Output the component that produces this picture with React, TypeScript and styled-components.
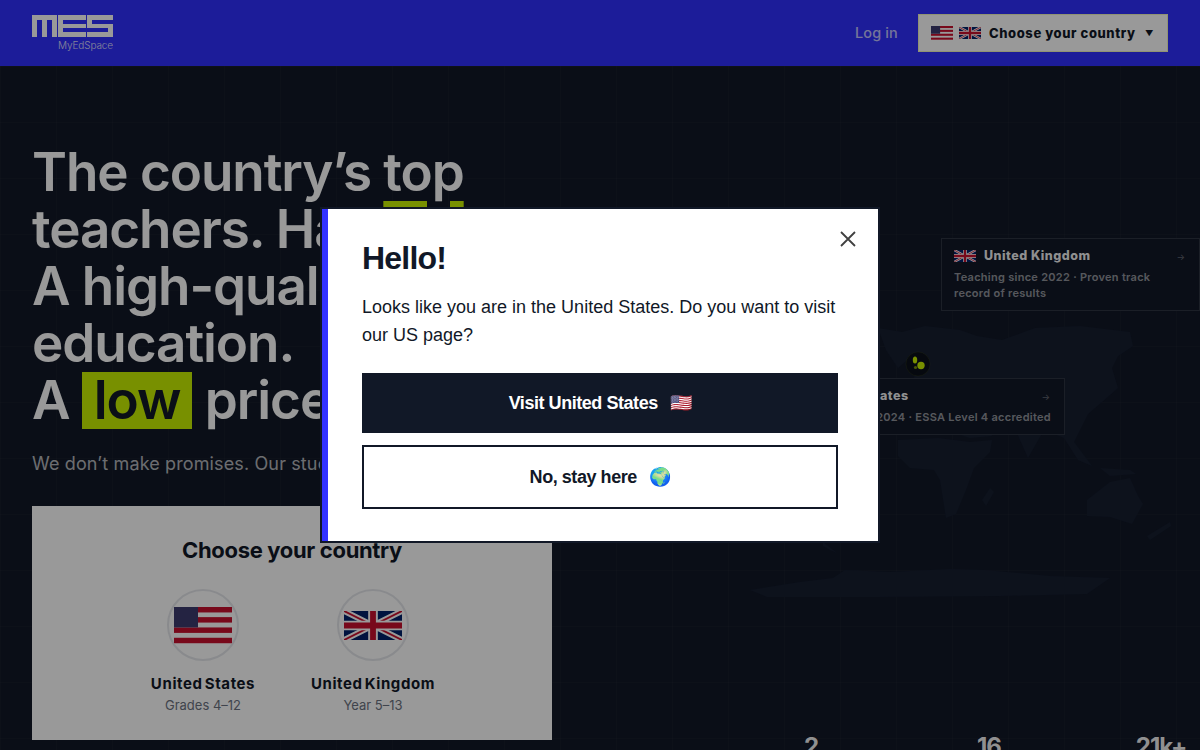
import React from "react";
import styled, { createGlobalStyle } from "styled-components";

const GlobalStyle = createGlobalStyle`
  html, body {
    margin: 0;
    height: 100%;
    overflow: hidden;
    background: #111827;
  }
  * {
    box-sizing: border-box;
  }
`;

const Page = styled.div`
  height: 750px;
  overflow: hidden;
  display: flex;
  flex-direction: column;
  font-family: Inter, "Liberation Sans", sans-serif;
  color: #fff;
  background-color: #111827;
`;

const Header = styled.header`
  flex: 0 0 66px;
  display: flex;
  align-items: center;
  justify-content: space-between;
  padding: 0 32px;
  background: #3030ff;
`;

const Logo = styled.div`
  display: flex;
  flex-direction: column;
  align-items: flex-end;
  gap: 2px;
  width: 81px;
`;

const LogoName = styled.span`
  font-size: 10px;
  line-height: 12px;
  font-weight: 300;
  letter-spacing: -0.01em;
  color: rgba(255, 255, 255, 0.85);
`;

const Nav = styled.nav`
  display: flex;
  align-items: center;
  gap: 20px;
`;

const LoginLink = styled.a`
  margin-bottom: 2px;
  font-size: 14.5px;
  font-weight: 500;
  letter-spacing: 0.01em;
  color: rgba(255, 255, 255, 0.72);
`;

const CountryButton = styled.button`
  width: 250px;
  height: 38px;
  display: flex;
  align-items: center;
  gap: 6px;
  padding: 0 12px 1px;
  border: 1px solid #f0f5c0;
  background: #fff;
  color: #111827;
  font-family: inherit;
  font-size: 13px;
  font-weight: 800;
  letter-spacing: 0.045em;
`;

const ButtonLabel = styled.span`
  margin-left: 2px;
  flex: 1;
  text-align: left;
`;

const Caret = styled.span`
  font-size: 8px;
  margin-right: 1px;
`;

const Main = styled.main`
  flex: 1;
  display: grid;
  grid-template-columns: 600px 600px;
  min-height: 0;
  background-image:
    linear-gradient(rgba(255, 255, 255, 0.02) 1px, transparent 1px),
    linear-gradient(90deg, rgba(255, 255, 255, 0.02) 1px, transparent 1px);
  background-size: 56px 56px;
`;

const Hero = styled.section`
  padding: 78px 48px 0 32px;
`;

const Headline = styled.h1`
  margin: 0;
  font-size: 53px;
  line-height: 57px;
  font-weight: 600;
  letter-spacing: -0.02em;
  white-space: nowrap;
`;

const Underlined = styled.span`
  text-decoration: underline;
  text-decoration-color: #c8f000;
  text-decoration-thickness: 8px;
  text-underline-offset: 10px;
`;

const Highlight = styled.span`
  display: inline-block;
  padding: 0 12px;
  background: #c8f000;
  color: #111827;
`;

const Lead = styled.p`
  margin: 21px 0 0;
  font-size: 18px;
  line-height: 28px;
  letter-spacing: 0.007em;
  color: rgba(255, 255, 255, 0.7);
  white-space: nowrap;
`;

const ChooserCard = styled.div`
  margin-top: 28px;
  height: 234px;
  padding-top: 30px;
  background: #fff;
  color: #111827;
  text-align: center;
`;

const ChooserTitle = styled.h2`
  margin: 0;
  font-size: 22px;
  line-height: 28px;
  font-weight: 700;
  letter-spacing: -0.015em;
`;

const ChooserRow = styled.div`
  display: flex;
  justify-content: center;
  margin-top: 25px;
  padding-right: 8px;
`;

const ChooserItem = styled.div`
  width: 170px;
  display: flex;
  flex-direction: column;
  align-items: center;
`;

const FlagCircle = styled.div`
  width: 72px;
  height: 72px;
  border-radius: 50%;
  border: 2px solid #e5e7eb;
  display: flex;
  align-items: center;
  justify-content: center;
`;

const ChooserName = styled.div`
  margin-top: 13px;
  font-size: 15px;
  line-height: 20px;
  font-weight: 700;
  letter-spacing: 0.04em;
  word-spacing: -2px;
`;

const ChooserSub = styled.div`
  margin-top: 2px;
  font-size: 13px;
  line-height: 18px;
  color: #6b7280;
`;

const Side = styled.section`
  display: flex;
  flex-direction: column;
  min-height: 0;
`;

const MapCanvas = styled.div`
  position: relative;
  flex: 0 0 666px;
`;

const WorldMap = styled.svg`
  position: absolute;
  left: 40px;
  top: 244px;
  width: 560px;
  height: 300px;
`;

const MapPin = styled.svg`
  position: absolute;
  left: 304px;
  top: 284px;
  width: 28px;
  height: 28px;
`;

const RegionCard = styled.div<{ $left: number; $top: number; $width: number }>`
  position: absolute;
  left: ${({ $left }) => $left}px;
  top: ${({ $top }) => $top}px;
  width: ${({ $width }) => $width}px;
  padding: 9px 12px;
  background: #111827;
  border: 1px solid rgba(255, 255, 255, 0.12);
`;

const RegionHead = styled.div`
  display: flex;
  align-items: center;
  gap: 8px;
`;

const RegionName = styled.span`
  flex: 1;
  font-size: 12.5px;
  line-height: 16px;
  font-weight: 800;
  letter-spacing: 0.04em;
  color: rgba(255, 255, 255, 0.95);
`;

const RegionArrow = styled.span`
  margin-right: 2px;
  font-size: 9px;
  color: rgba(255, 255, 255, 0.35);
`;

const RegionText = styled.p`
  margin: 5px 0 0;
  font-size: 11px;
  line-height: 16px;
  font-weight: 600;
  letter-spacing: 0.025em;
  color: rgba(255, 255, 255, 0.55);
`;

const Stats = styled.div`
  display: grid;
  grid-template-columns: 176px 180px 164px;
  padding-left: 123px;
`;

const StatValue = styled.div`
  text-align: center;
  font-size: 24px;
  line-height: 30px;
  font-weight: 700;
  letter-spacing: -0.04em;
  color: rgba(255, 255, 255, 0.95);
`;

const Overlay = styled.div`
  position: fixed;
  inset: 0;
  display: flex;
  align-items: center;
  justify-content: center;
  background: rgba(0, 0, 0, 0.4);
`;

const Modal = styled.div`
  position: relative;
  width: 560px;
  height: 336px;
  padding: 29px 40px 32px 40px;
  background: #fff;
  border: 2px solid #111827;
  box-shadow: inset 6px 0 0 #3333ff;
  font-family: "Liberation Sans", Arial, sans-serif;
  color: #111827;
`;

const CloseButton = styled.button`
  position: absolute;
  top: 21px;
  right: 21px;
  display: flex;
  padding: 0;
  border: 0;
  background: none;
  color: #404040;
`;

const ModalTitle = styled.h2`
  margin: 0;
  font-size: 32px;
  line-height: 40px;
  font-weight: 700;
  letter-spacing: -0.025em;
`;

const ModalText = styled.p`
  margin: 15px 0 24px;
  font-size: 18px;
  line-height: 28px;
`;

const ModalButton = styled.button<{ $primary?: boolean }>`
  width: 100%;
  height: ${({ $primary }) => ($primary ? 60 : 64)}px;
  display: flex;
  align-items: center;
  justify-content: center;
  gap: 12px;
  margin-bottom: 12px;
  border: ${({ $primary }) => ($primary ? "0" : "2px solid #111827")};
  background: ${({ $primary }) => ($primary ? "#111827" : "#fff")};
  color: ${({ $primary }) => ($primary ? "#fff" : "#111827")};
  font-family: inherit;
  font-size: 18px;
  font-weight: 700;
  letter-spacing: -0.025em;
`;

const UsFlag = ({ width, height }: { width: number; height: number }) => (
  <svg width={width} height={height} viewBox="0 0 58 38" preserveAspectRatio="none">
    <rect width="58" height="38" fill="#fff" />
    {[0, 10.4, 21, 31.6].map((y) => (
      <rect key={y} y={y} width="58" height="5.6" fill="#c8102e" />
    ))}
    <rect width="24" height="21" fill="#3c3b6e" />
  </svg>
);

const UkFlag = ({ width, height }: { width: number; height: number }) => (
  <svg width={width} height={height} viewBox="0 0 60 30" preserveAspectRatio="none">
    <rect width="60" height="30" fill="#012169" />
    <path d="M0 0L60 30M60 0L0 30" stroke="#fff" strokeWidth="6" />
    <path d="M0 0L60 30M60 0L0 30" stroke="#c8102e" strokeWidth="2" />
    <path d="M30 0V30M0 15H60" stroke="#fff" strokeWidth="10" />
    <path d="M30 0V30M0 15H60" stroke="#c8102e" strokeWidth="6" />
  </svg>
);

const MesLogo = () => (
  <svg width="81" height="22" viewBox="0 0 81 22" fill="#fff">
    <path d="M0 0H25V22H20V5H15V22H10V5H5V22H0Z" />
    <path d="M26 0H54V5H31V9H54V13H31V17H54V22H26Z" />
    <path d="M55 0H81V5H60V9H81V22H55V17H76V13H55Z" />
  </svg>
);

const CloseIcon = () => (
  <svg width="18" height="18" viewBox="0 0 18 18" fill="none" stroke="currentColor" strokeWidth="1.8">
    <path d="M2 2L16 16M16 2L2 16" />
  </svg>
);

// coordinates are page pixels minus the map's origin (640, 310)
const WorldShapes = () => (
  <>
    <path d="M238 18L262 22L285 16L320 20L337 26L362 30L395 18L440 16L490 22L493 36L478 46L472 58L478 78L462 92L448 104L434 132L452 156L438 150L424 128L404 120L388 148L372 112L350 104L352 126L330 128L300 118L268 114L256 106L266 88L276 62L290 50L272 46L258 58L246 40Z" />
    <path d="M258 130L298 128L330 132L352 130L350 142L334 158L326 180L316 204L306 208L300 170L294 160L270 158L258 146Z" />
    <path d="M350 178L354 182L346 196L342 190Z" />
    <path d="M447 190L470 172L490 168L498 186L503 194L492 214L470 207L447 206Z" />
    <path d="M507 226L530 212L531 216L510 230Z" />
    <path d="M183 232L197 243L190 240L183 236Z" />
    <path d="M110 280L160 272L193 268L205 260L250 262L310 259L345 260L410 266L470 268L447 284L360 286L240 287L127 287Z" />
    <path d="M460 158L490 160L496 164L470 166Z" />
  </>
);

const App = () => {
  return (
    <>
      <GlobalStyle />
      <Page>
        <Header>
          <Logo>
            <MesLogo />
            <LogoName>MyEdSpace</LogoName>
          </Logo>
          <Nav>
            <LoginLink>Log in</LoginLink>
            <CountryButton>
              <UsFlag width={22} height={14} />
              <UkFlag width={22} height={12} />
              <ButtonLabel>Choose your country</ButtonLabel>
              <Caret>▼</Caret>
            </CountryButton>
          </Nav>
        </Header>
        <Main>
          <Hero>
            <Headline>
              The country’s <Underlined>top</Underlined>
              <br />
              teachers. Happy
              <br />
              A high-quality
              <br />
              education.
              <br />
              A <Highlight>low</Highlight> price.
            </Headline>
            <Lead>We don’t make promises. Our students’ results do.</Lead>
            <ChooserCard>
              <ChooserTitle>Choose your country</ChooserTitle>
              <ChooserRow>
                <ChooserItem>
                  <FlagCircle>
                    <UsFlag width={58} height={37} />
                  </FlagCircle>
                  <ChooserName>United States</ChooserName>
                  <ChooserSub>Grades 4–12</ChooserSub>
                </ChooserItem>
                <ChooserItem>
                  <FlagCircle>
                    <UkFlag width={58} height={29} />
                  </FlagCircle>
                  <ChooserName>United Kingdom</ChooserName>
                  <ChooserSub>Year 5–13</ChooserSub>
                </ChooserItem>
              </ChooserRow>
            </ChooserCard>
          </Hero>
          <Side>
            <MapCanvas>
              <WorldMap viewBox="0 0 560 300" fill="#161e30">
                <WorldShapes />
              </WorldMap>
              <RegionCard $left={341} $top={172} $width={259}>
                <RegionHead>
                  <UkFlag width={22} height={12} />
                  <RegionName>United Kingdom</RegionName>
                  <RegionArrow>→</RegionArrow>
                </RegionHead>
                <RegionText>Teaching since 2022 · Proven track record of results</RegionText>
              </RegionCard>
              <RegionCard $left={176} $top={312} $width={289}>
                <RegionHead>
                  <UsFlag width={22} height={14} />
                  <RegionName>United States</RegionName>
                  <RegionArrow>→</RegionArrow>
                </RegionHead>
                <RegionText>Teaching since 2024 · ESSA Level 4 accredited</RegionText>
              </RegionCard>
              <MapPin viewBox="0 0 28 28">
                <circle cx="14" cy="14" r="12" fill="#0b0f1a" stroke="#c8f000" strokeOpacity="0.08" />
                <ellipse cx="11" cy="10" rx="2.2" ry="3.5" fill="#c8f000" />
                <circle cx="17" cy="15.5" r="3.7" fill="#c8f000" />
                <circle cx="11.5" cy="17.5" r="1.6" fill="#c8f000" fillOpacity="0.6" />
              </MapPin>
            </MapCanvas>
            <Stats>
              <StatValue>2</StatValue>
              <StatValue>16</StatValue>
              <StatValue>21k+</StatValue>
            </Stats>
          </Side>
        </Main>
      </Page>
      <Overlay>
        <Modal>
          <CloseButton>
            <CloseIcon />
          </CloseButton>
          <ModalTitle>Hello!</ModalTitle>
          <ModalText>Looks like you are in the United States. Do you want to visit our US page?</ModalText>
          <ModalButton $primary>Visit United States <span>🇺🇸</span></ModalButton>
          <ModalButton>No, stay here <span>🌍</span></ModalButton>
        </Modal>
      </Overlay>
    </>
  );
};

export default App;
